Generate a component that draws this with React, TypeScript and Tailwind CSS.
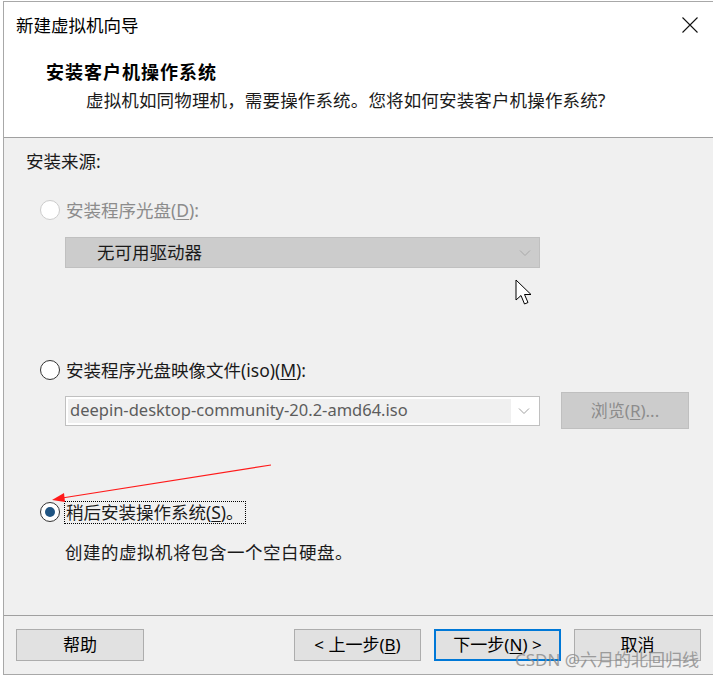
import React from "react";

const font = { fontFamily: '"Noto Sans", "Noto Sans CJK SC", sans-serif' };

const Chevron = ({ color = "#a0a0a0" }: { color?: string }) => (
  <svg width="12" height="8" viewBox="0 0 12 8">
    <path d="M1 1.5 L6 6.5 L11 1.5" fill="none" stroke={color} strokeWidth="1" />
  </svg>
);

const Radio = ({ checked, disabled }: { checked?: boolean; disabled?: boolean }) => (
  <span
    className={
      "flex h-[20px] w-[20px] shrink-0 items-center justify-center rounded-full bg-white border " +
      (checked ? "border-[#333333] border-[1.5px]" : disabled ? "border-[#cccccc]" : "border-[#333333]")
    }
  >
    {checked && <span className="h-[10px] w-[10px] rounded-full bg-[#1f5482]" />}
  </span>
);

const Btn = ({ children, focus, w = "w-[127px]" }: { children: React.ReactNode; focus?: boolean; w?: string }) => (
  <button
    className={
      "flex h-[32px] items-center justify-center bg-[#e1e1e1] text-[17px] text-black " +
      w +
      " " +
      (focus ? "border-2 border-[#0078d7]" : "border border-[#adadad]")
    }
  >
    {children}
  </button>
);

export default function App() {
  return (
    <div className="relative h-[677px] w-[713px] overflow-hidden bg-white" style={font}>
      <div className="ml-[3px] mt-[1px] flex h-[674px] flex-col border-l border-t border-b border-[#a8a8a8]">
        {/* header */}
        <div className="h-[135px] shrink-0 bg-white">
          <div className="flex h-[46px] items-center justify-between pl-[12px] pr-[15px]">
            <span className="text-[17.5px] text-black">新建虚拟机向导</span>
            <svg width="16" height="16" viewBox="0 0 16 16">
              <path d="M0.5 0.5 L15.5 15.5 M15.5 0.5 L0.5 15.5" stroke="#111" strokeWidth="1.1" />
            </svg>
          </div>
          <div className="pl-[42px] pt-[10px] text-[18px] font-bold leading-[28px] tracking-[1px] text-black">
            安装客户机操作系统
          </div>
          <div className="pl-[82px] text-[17.5px] leading-[28px] tracking-[0.15px] text-[#1a1a1a]">
            虚拟机如同物理机，需要操作系统。您将如何安装客户机操作系统?
          </div>
        </div>

        {/* body */}
        <div className="flex flex-1 flex-col border-t border-[#a0a0a0] bg-[#f0f0f0] pl-[22px]">
          <div className="mt-[11px] h-[24px] text-[17.5px] leading-[24px] text-[#1a1a1a]">安装来源:</div>

          <div className="mt-[25px] flex h-[24px] items-center gap-[6px] pl-[14px]">
            <Radio disabled />
            <span className="text-[17.5px] text-[#8c8c8c]">
              安装程序光盘(<span className="underline underline-offset-2">D</span>):
            </span>
          </div>

          <div className="ml-[39px] mt-[15px] flex h-[31px] w-[475px] items-center justify-between border border-[#c0c0c0] bg-[#cccccc] pl-[31px] pr-[8px]">
            <span className="text-[17.5px] text-[#1a1a1a]">无可用驱动器</span>
            <Chevron color="#a8a8a8" />
          </div>

          <div className="mt-[90px] flex h-[24px] items-center gap-[6px] pl-[14px]">
            <Radio />
            <span className="text-[17.5px] text-[#1a1a1a]">
              安装程序光盘映像文件(iso)(<span className="underline underline-offset-2">M</span>):
            </span>
          </div>

          <div className="mt-[10px] flex h-[37px] items-center">
            <div className="ml-[39px] flex h-[30px] w-[475px] items-center border border-[#c0c0c0] bg-white p-[2px]">
              <div className="flex h-full w-[443px] items-center bg-[#f0f0f0] pl-[2px]">
                <span className="text-[16.5px] text-[#5c5c5c]">deepin-desktop-community-20.2-amd64.iso</span>
              </div>
              <div className="flex flex-1 items-center justify-center">
                <Chevron color="#a0a0a0" />
              </div>
            </div>
            <div className="ml-[21px] flex h-[37px] w-[128px] items-center justify-center border border-[#bfbfbf] bg-[#cccccc] text-[17px] text-[#8c8c8c]">
              浏览(<span className="underline underline-offset-2">R</span>)...
            </div>
          </div>

          <div className="mt-[71px] flex h-[24px] items-center gap-[4px] pl-[14px]">
            <Radio checked />
            <span className="border border-dotted border-black px-[1px] text-[17.5px] leading-[21px] text-[#1a1a1a]">
              稍后安装操作系统(<span className="underline underline-offset-2">S</span>)。
            </span>
          </div>

          <div className="mt-[16px] pl-[39px] text-[17.5px] leading-[24px] tracking-[0.5px] text-[#1a1a1a]">
            创建的虚拟机将包含一个空白硬盘。
          </div>
        </div>

        {/* footer */}
        <div className="flex h-[59px] shrink-0 items-start border-t border-[#a0a0a0] bg-[#f0f0f0] pt-[13px] pl-[12px]">
          <Btn w="w-[128px]">帮助</Btn>
          <div className="ml-[150px] flex gap-[13px]">
            <Btn>
              &lt; 上一步(<span className="underline underline-offset-2">B</span>)
            </Btn>
            <Btn focus>
              下一步(<span className="underline underline-offset-2">N</span>) &gt;
            </Btn>
            <Btn>取消</Btn>
          </div>
        </div>
      </div>

      {/* annotation arrow */}
      <svg className="pointer-events-none absolute left-0 top-0" width="713" height="677">
        <line x1="271" y1="465" x2="62" y2="498" stroke="#ff1a1a" strokeWidth="1.2" />
        <polygon points="52,500 64,493 65,502" fill="#ff1a1a" />
      </svg>

      {/* mouse cursor */}
      <svg className="pointer-events-none absolute left-[515px] top-[279px]" width="20" height="28" viewBox="0 0 20 28">
        <path
          d="M1 1 L1 21 L6 16.5 L9.5 25 L13 23.5 L9.5 15.5 L16 15.5 Z"
          fill="white"
          stroke="black"
          strokeWidth="1"
          strokeLinejoin="miter"
        />
      </svg>

      {/* watermark */}
      <div className="pointer-events-none absolute left-[515px] top-[647px] text-[17px] text-[#8a8a8a] opacity-80">
        CSDN @六月的北回归线
      </div>
    </div>
  );
}
